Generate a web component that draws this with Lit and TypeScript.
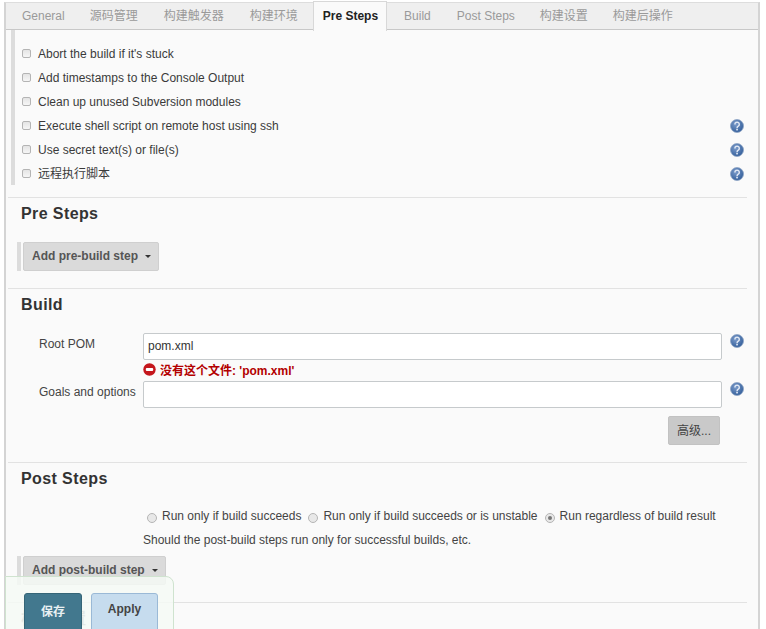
import { LitElement, html, css } from "lit";
import { customElement } from "lit/decorators.js";

const help = () => html`<svg class="help" width="14" height="14" viewBox="0 0 14 14">
  <defs><radialGradient id="hg" cx="40%" cy="35%" r="70%"><stop offset="0" stop-color="#7c9ccb"/><stop offset="1" stop-color="#2f5b98"/></radialGradient></defs>
  <circle cx="7" cy="7" r="6.5" fill="url(#hg)" stroke="#8ea4c4" stroke-width="0.8"/>
  <path d="M4.9 5.4a2.2 2.2 0 1 1 3.4 1.8c-.8.5-1.2.9-1.2 1.7" fill="none" stroke="#dfe7f3" stroke-width="1.5"/>
  <rect x="6.2" y="9.7" width="1.7" height="1.7" fill="#dfe7f3"/>
</svg>`;

@customElement("app-root")
export class AppRoot extends LitElement {
  static styles = css`
    :host { display: block; width: 766px; height: 629px; overflow: hidden; position: relative; background: #fff; font-family: "Liberation Sans", Arial, "Noto Sans CJK SC", sans-serif; font-size: 12px; color: #333; box-sizing: border-box; }
    * { box-sizing: border-box; }
    .frame { margin: 2px 6px 0 4px; border-left: 2px solid #d4d4d4; border-right: 2px solid #d4d4d4; border-top: 1px solid #ddd; background: #fafafa; height: 700px; }
    .tabs { display: flex; height: 27px; background: #efefef; border-bottom: 1px solid #c8c8c8; padding-left: 3px; }
    .tab { color: #9a9a9a; padding: 0 13px; line-height: 26px; white-space: nowrap; height: 26px; }
    .tab:first-child, .tab:nth-child(7), .tab:nth-child(8) { margin-right: -1px; }
    .tab.on { background: #fafafa; color: #222; font-weight: bold; border: 1px solid #d8d8d8; border-bottom: none; height: 30px; margin: -2px 4px 0 2px; line-height: 29px; padding: 0 8px 0 9px; position: relative; }
    .body { padding: 0 11px 0 0; }
    .opts { margin-left: 5px; border-left: 4px solid #dcdcdc; height: 155px; padding: 12px 0 0 7px; }
    .opt { display: flex; align-items: center; height: 24px; }
    .cb { width: 9px; height: 9px; border: 1px solid #b4b4b4; border-radius: 2px; background: linear-gradient(#e4e4e4,#f6f6f6); margin-right: 1px; margin-top: -2px; flex: none; }
    .opt span { margin-left: 6px; flex: 1; color: #3a3a3a; }
    .opt span.cjk { margin-top: -3px; }
    .opt .help { margin-right: 3px; }
    hr { border: none; border-top: 1px solid #e2e2e2; margin: 0 0 0 2px; }
    .hr1 { margin-top: 12px; }
    h2 { font-size: 16px; font-weight: bold; margin: 0; line-height: 20px; color: #333; padding: 6px 0 18px 15px; letter-spacing: 0.4px; }
    h2.tail { padding-bottom: 0; opacity: .6; }
    h2.post { padding-bottom: 19px; }
    .hbar { display: flex; margin-left: 11px; border-left: 4px solid #dcdcdc; height: 29px; padding-left: 2px; }
    .hbar.post { margin-top: 8px; }
    .btn { background: #dadada; border: 1px solid #cfcfcf; border-radius: 2px; color: #555; font-weight: bold; display: flex; align-items: center; padding: 0 0 2px 8px; height: 29px; }
    .caret { display: inline-block; border: 3px solid transparent; border-top: 3px solid #333; border-bottom: none; margin: 2px 7px 0 7px; }
    .hr2 { margin-top: 17px; }
    .field { display: flex; align-items: flex-start; }
    .lab { width: 137px; padding: 4px 0 0 33px; color: #444; flex: none; white-space: nowrap; }
    .inp { width: 579px; height: 27px; border: 1px solid #c6cacc; border-radius: 2px; background: #fff; padding: 0 4px; line-height: 25px; flex: none; color: #333; }
    .field .help { margin: 1px 0 0 8px; }
    .err { display: flex; align-items: center; margin-left: 137px; height: 21px; padding-bottom: 2px; color: #b30000; font-weight: bold; }
    .err svg { margin-right: 4px; }
    .adv { display: flex; justify-content: flex-end; padding: 8px 27px 0 0; }
    .adv div { width: 52px; height: 29px; padding-bottom: 2px; background: #c9c9c9; border: 1px solid #c2c2c2; border-radius: 2px; color: #444; display: flex; align-items: center; justify-content: center; }
    .radios { display: flex; align-items: center; margin-left: 141px; height: 16px; white-space: nowrap; color: #444; }
    .rd { width: 10px; height: 10px; border-radius: 50%; border: 1px solid #b5b5b5; background: #e8e8e8; margin-top: 4px; flex: none; display: flex; align-items: center; justify-content: center; }
    .rd.on::after { content: ""; width: 4px; height: 4px; border-radius: 50%; background: #777; }
    .radios span { margin: 0 7px 0 5px; }
    .note { margin: 8px 0 0 137px; height: 16px; line-height: 16px; color: #444; }
    .bottom { position: absolute; left: 5px; top: 576px; width: 169px; height: 60px; background: rgba(244,249,244,.86); border: 1px solid #cfe3cf; border-radius: 0 8px 0 0; padding: 16px 0 0 18px; display: flex; gap: 9px; }
    .save, .apply { height: 40px; border-radius: 3px; font-weight: bold; display: flex; align-items: flex-start; justify-content: center; padding-top: 8px; }
    .save { width: 58px; background: #42788e; border: 1px solid #356577; color: #e8f0f3; }
    .apply { width: 67px; background: #c6dcee; border: 1px solid #9ab9d6; color: #444; }
  `;

  render() {
    const opts: [string, boolean, boolean][] = [
      ["Abort the build if it's stuck", false, false],
      ["Add timestamps to the Console Output", false, false],
      ["Clean up unused Subversion modules", false, false],
      ["Execute shell script on remote host using ssh", true, false],
      ["Use secret text(s) or file(s)", true, false],
      ["远程执行脚本", true, true],
    ];
    const tabs = ["General", "源码管理", "构建触发器", "构建环境", "Pre Steps", "Build", "Post Steps", "构建设置", "构建后操作"];
    return html`
      <div class="frame">
        <div class="tabs">
          ${tabs.map((t) => html`<div class="tab ${t === "Pre Steps" ? "on" : ""}">${t}</div>`)}
        </div>
        <div class="body">
          <div class="opts">
            ${opts.map(([t, h, c]) => html`<div class="opt"><i class="cb"></i><span class="${c ? "cjk" : ""}">${t}</span>${h ? help() : ""}</div>`)}
          </div>
          <hr class="hr1" />
          <h2>Pre Steps</h2>
          <div class="hbar"><div class="btn">Add pre-build step<i class="caret"></i></div></div>
          <hr class="hr2" />
          <h2>Build</h2>
          <div class="field"><div class="lab">Root POM</div><div class="inp">pom.xml</div>${help()}</div>
          <div class="err">
            <svg width="13" height="13" viewBox="0 0 13 13"><circle cx="6.5" cy="6.5" r="6.2" fill="#c4161c"/><rect x="2.8" y="5" width="7.4" height="3" rx="1" fill="#fff"/></svg>
            没有这个文件: 'pom.xml'
          </div>
          <div class="field"><div class="lab">Goals and options</div><div class="inp"></div>${help()}</div>
          <div class="adv"><div>高级...</div></div>
          <hr class="hr2" />
          <h2 class="post">Post Steps</h2>
          <div class="radios">
            <i class="rd"></i><span>Run only if build succeeds</span>
            <i class="rd"></i><span>Run only if build succeeds or is unstable</span>
            <i class="rd on"></i><span>Run regardless of build result</span>
          </div>
          <div class="note">Should the post-build steps run only for successful builds, etc.</div>
          <div class="hbar post"><div class="btn">Add post-build step<i class="caret"></i></div></div>
          <hr class="hr2" />
          <h2 class="tail">构建设置</h2>
        </div>
      </div>
      <div class="bottom">
        <div class="save">保存</div>
        <div class="apply">Apply</div>
      </div>
    `;
  }
}
